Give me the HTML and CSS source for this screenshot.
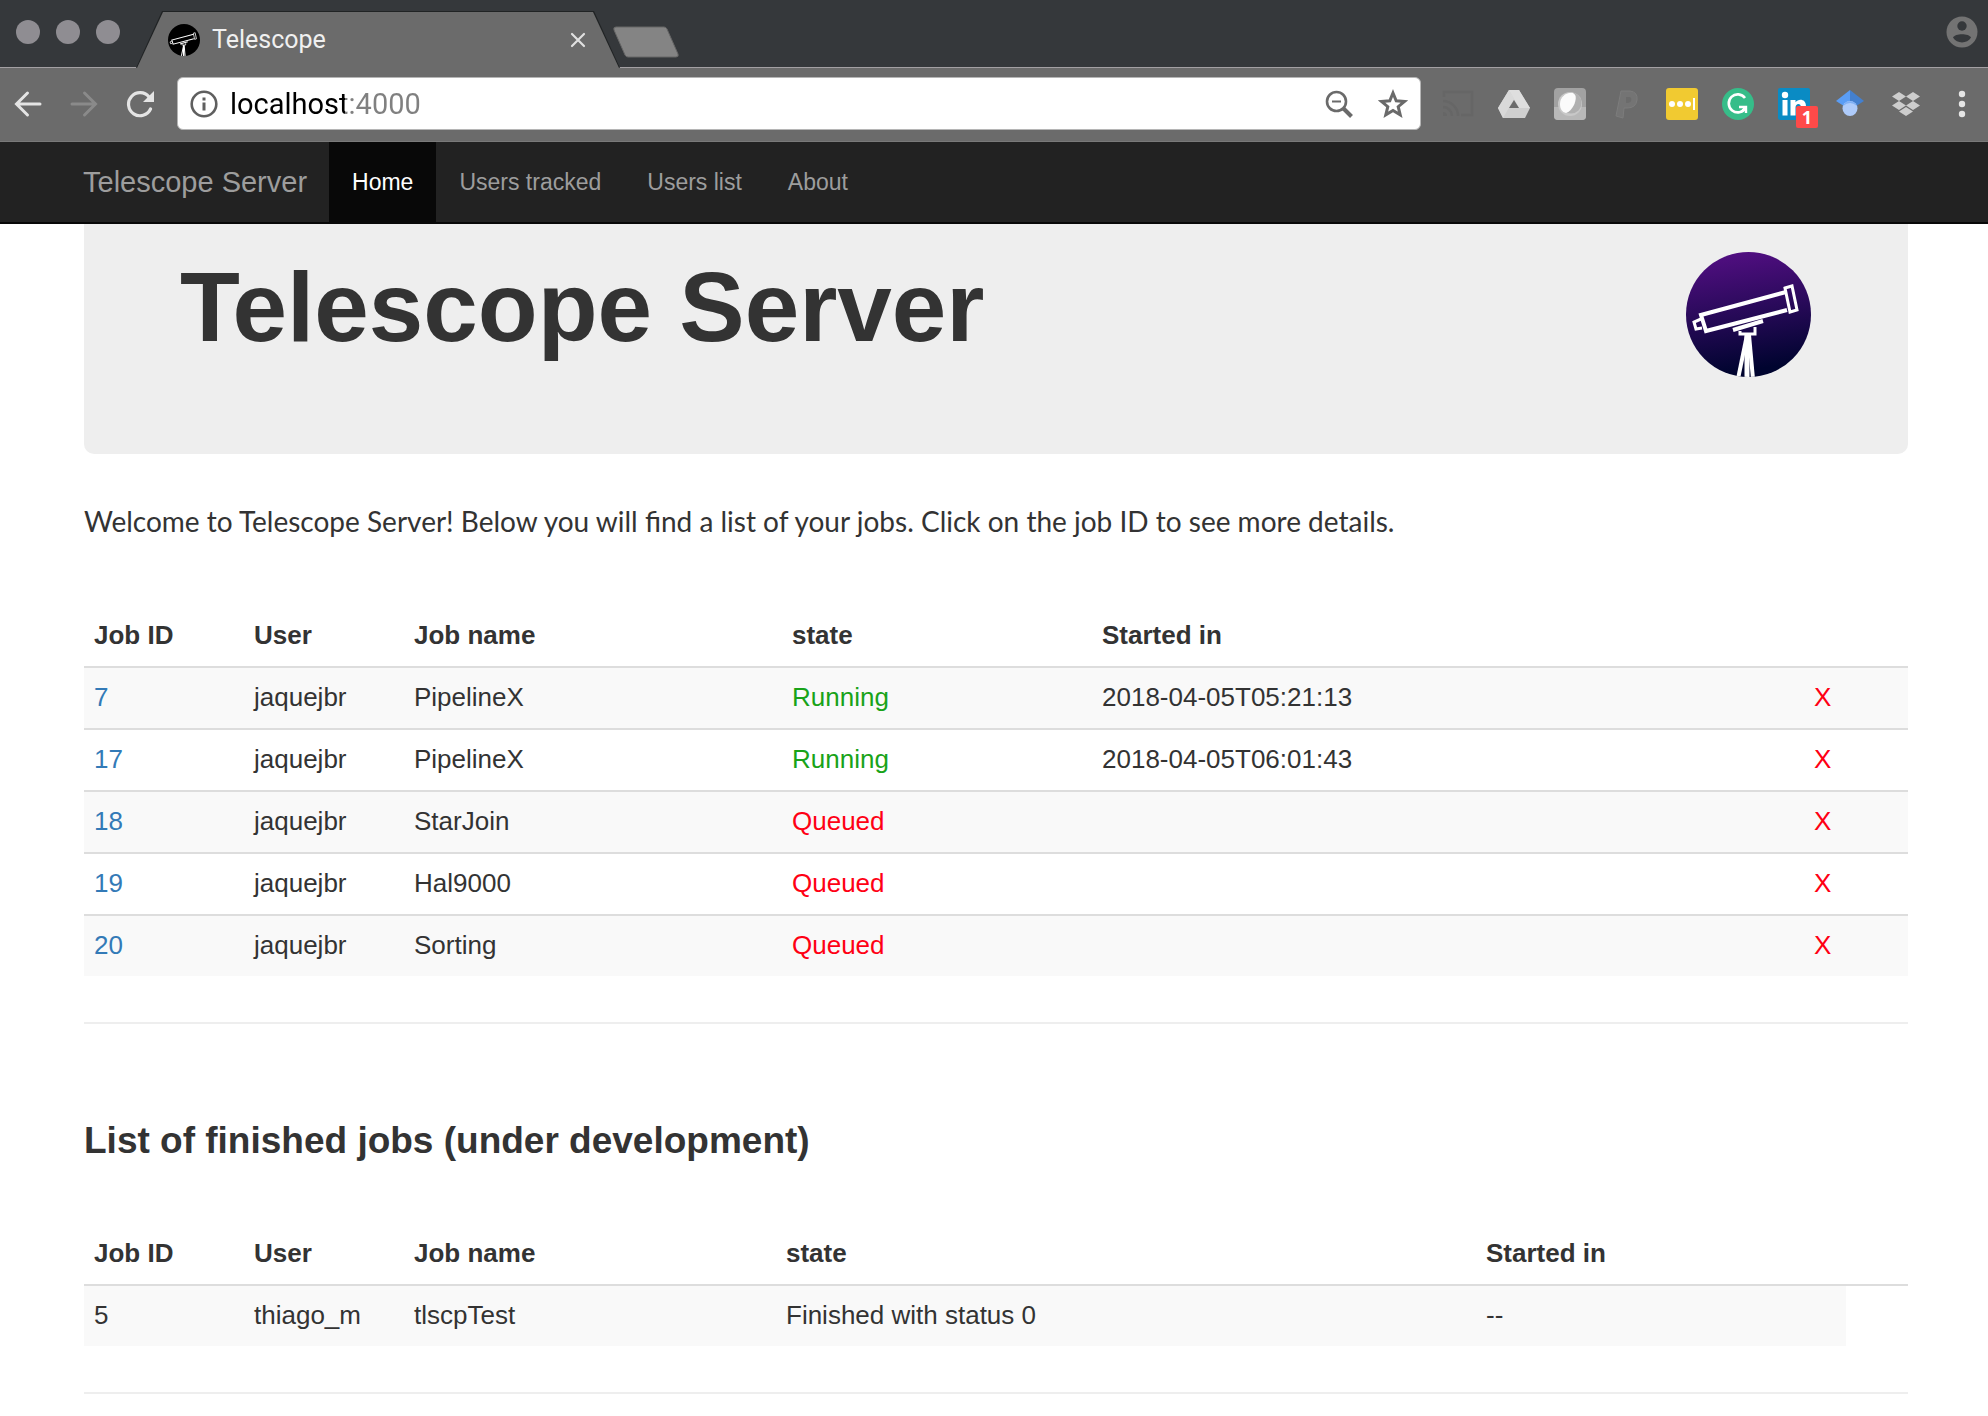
FILE: index.html
```html
<!DOCTYPE html>
<html lang="en">
<head>
<meta charset="utf-8">
<title>Telescope</title>
<link rel="stylesheet" href="styles.css">
</head>
<body>
<svg class="defs" width="0" height="0" aria-hidden="true">
  <defs>
    <linearGradient id="night" x1="0" y1="0" x2="0.15" y2="1">
      <stop offset="0" stop-color="#560f86"/>
      <stop offset="0.5" stop-color="#2b0a5c"/>
      <stop offset="1" stop-color="#00042f"/>
    </linearGradient>
    <clipPath id="disc"><circle cx="62.5" cy="62.5" r="62.5"/></clipPath>
    <symbol id="scope" viewBox="0 0 125 125">
      <g clip-path="url(#disc)" fill="none" stroke="#fff" stroke-width="4">
        <path d="M100 40 15 63l5 16 81-21"/>
        <path d="M99 36l7-2 5 24-7 2z" stroke-width="3"/>
        <path d="M15 67l-7 3 2 7 6-1" stroke-width="3"/>
        <path d="M47 78l30-9" stroke-width="4"/>
        <path d="M54 79v3h15v-7" stroke-width="3"/>
        <path d="M61 83 52 127" stroke-width="4"/>
        <path d="M61 83v44" stroke-width="5"/>
        <path d="M63 83l4 44" stroke-width="4"/>
      </g>
    </symbol>
  </defs>
</svg>

<header class="browser">
  <div class="tabstrip">
    <div class="lights"><span></span><span></span><span></span></div>
    <div class="tab">
      <svg class="favicon" viewBox="0 0 125 125" aria-hidden="true"><circle cx="62.5" cy="62.5" r="62.5"/><use href="#scope"/></svg>
      <span class="tab-title">Telescope</span>
      <button class="icon-btn tab-close" aria-label="Close tab"><svg width="16" height="16" viewBox="0 0 16 16"><path d="M2 2l12 12M14 2 2 14" stroke="#e0e0e0" stroke-width="2.2" stroke-linecap="round"/></svg></button>
    </div>
    <button class="icon-btn new-tab" aria-label="New tab"><svg width="66" height="32" viewBox="0 0 66 32"><path d="M3 1h48q2 0 3 2l11 25q1 3-2 3H15q-2 0-3-2L1 4q-1-3 2-3z" fill="#848484" stroke="#666"/></svg></button>
    <button class="icon-btn profile" aria-label="Profile"><svg width="32" height="32" viewBox="0 0 32 32"><circle cx="16" cy="16" r="15.500" fill="#737373"/><circle cx="16" cy="10" r="4.700" fill="#35383b"/><path d="M7 21.500C9 17 23 17 25 21.500 21 28 11 28 7 21.500z" fill="#35383b"/></svg></button>
  </div>

  <div class="toolbar">
    <div class="history">
      <button class="icon-btn" aria-label="Back"><svg width="28" height="28" viewBox="0 0 28 28"><path d="M26 14H3M13.500 3 2.500 14l11 11" fill="none" stroke="#e4e4e4" stroke-width="3" stroke-linecap="round"/></svg></button>
      <button class="icon-btn" aria-label="Forward"><svg width="28" height="28" viewBox="0 0 28 28"><path d="M2 14h23M14.500 3l11 11-11 11" fill="none" stroke="#8a8a8a" stroke-width="3" stroke-linecap="round"/></svg></button>
      <button class="icon-btn" aria-label="Reload"><svg width="28" height="28" viewBox="0 0 28 28"><path d="M24.500 19A11.500 11.500 0 1 1 23 7" fill="none" stroke="#e4e4e4" stroke-width="3.200" stroke-linecap="round"/><path d="M28 1v11H17z" fill="#e4e4e4"/></svg></button>
    </div>
    <div class="omnibox">
      <button class="icon-btn" aria-label="Site information"><svg width="28" height="28" viewBox="0 0 28 28"><circle cx="14" cy="14" r="12.300" fill="none" stroke="#5f5f5f" stroke-width="2.600"/><path d="M12.500 7.500h3v3h-3zM12.500 12.500h3v8h-3z" fill="#5f5f5f"/></svg></button>
      <input class="address" type="text" aria-label="Address" value="localhost:4000">
      <button class="icon-btn" aria-label="Zoom"><svg width="28" height="28" viewBox="0 0 28 28"><circle cx="11.500" cy="11.500" r="9.500" fill="none" stroke="#6a6a6a" stroke-width="2.600"/><path d="M7 11.500h9" stroke="#6a6a6a" stroke-width="2"/><path d="M18.500 18.500l8 8" stroke="#6a6a6a" stroke-width="4"/></svg></button>
      <button class="icon-btn" aria-label="Bookmark"><svg width="30" height="30" viewBox="0 0 30 30"><path d="M15 4l3.200 7.800 8.300.6-6.300 5.300 2 8.200L15 21.500l-7.200 4.400 2-8.200-6.300-5.300 8.300-.6z" fill="none" stroke="#6a6a6a" stroke-width="3"/></svg></button>
    </div>
    <div class="extensions">
      <button class="icon-btn" aria-label="Cast"><svg width="32" height="32" viewBox="0 0 32 32"><g fill="none" stroke="#666" stroke-width="2.500"><path d="M2 9V4h28v23H19"/><path d="M1 13a15 15 0 0 1 15 15M1 19a9 9 0 0 1 9 9"/></g><path d="M1 24a4 4 0 0 1 4 4H1z" fill="#666"/></svg></button>
      <button class="icon-btn" aria-label="Drive"><svg width="32" height="32" viewBox="0 0 32 32"><path d="M11 2h10l11 18-5 10H5L0 20z" fill="#cfcfcf"/><path d="M11 2 0 20l5 10 11-19z" fill="#d9d9d9"/><path d="M11 2h10l11 18H21z" fill="#dedede"/><path d="M16 12l5 8H11z" fill="#6b6b6b"/></svg></button>
      <button class="icon-btn" aria-label="Lens"><svg width="32" height="32" viewBox="0 0 32 32"><rect width="32" height="32" rx="4" fill="#a2a2a2"/><path d="M0 19h32v9a4 4 0 0 1-4 4H4a4 4 0 0 1-4-4z" fill="#b8b8b8"/><circle cx="16" cy="16" r="12" fill="#c8c8c8"/><circle cx="17" cy="15" r="10.500" fill="#b0b0b0"/><path d="M6 16C6 9 12 4 19 5c4 2 3 7 1 12-2 4-5 7-8 8-4-1-6-4-6-9z" fill="#fbfbfb"/></svg></button>
      <button class="icon-btn" aria-label="Pandora"><svg width="32" height="32" viewBox="0 0 32 32"><path d="M11 3h9q8 1 7 9-1 8-10 8h-3l-1 10-7-2z" fill="#747474" stroke="#7c7c7c"/><path d="M16 9h4q2 1 1 4-1 2-5 2z" fill="#6b6b6b"/></svg></button>
      <button class="icon-btn" aria-label="Passwords"><svg width="32" height="32" viewBox="0 0 32 32"><rect width="32" height="32" rx="3" fill="#f1ca31"/><g fill="#fff"><circle cx="6" cy="16" r="3"/><circle cx="14" cy="16" r="3"/><circle cx="22" cy="16" r="3"/><path d="M27 10h2v12h-2z"/></g></svg></button>
      <button class="icon-btn" aria-label="Grammar"><svg width="32" height="32" viewBox="0 0 32 32"><circle cx="16" cy="16" r="16" fill="#36bd89"/><path d="M23 10A9 9 0 1 0 23.500 20" fill="none" stroke="#fff" stroke-width="2.600"/><path d="M17 19h7v6M24 19l-5 5" fill="none" stroke="#fff" stroke-width="2.400"/></svg></button>
      <button class="icon-btn has-badge" aria-label="LinkedIn, 1 notification"><svg width="32" height="32" viewBox="0 0 32 32"><rect width="32" height="32" rx="2" fill="#0a8bc4"/><g fill="#fff"><circle cx="7" cy="7" r="3.200"/><path d="M4.500 12h5v15.500h-5zM12.500 12h5v2.200c3-4 10.500-3.500 10.500 4v9.300h-5v-8c0-5-5.500-4.500-5.500 0v8h-5z"/></g></svg><span class="badge">1</span></button>
      <button class="icon-btn" aria-label="Scholar"><svg width="32" height="32" viewBox="0 0 32 32"><path d="M16 2v20L2 13z" fill="#5a9df5"/><path d="M16 2l14 11-14 9z" fill="#4480cf"/><circle cx="16" cy="20.500" r="7.500" fill="#aecbfa"/><path d="M9 18a7.500 7.500 0 0 1 14 0q-7-6-14 0z" fill="#7fb0f5"/></svg></button>
      <button class="icon-btn" aria-label="Dropbox"><svg width="32" height="32" viewBox="0 0 32 32"><path d="M9 4l7 4.500L9 13 2 8.500zM23 4l7 4.500-7 4.500-7-4.500zM9 13l7 4.500L9 22l-7-4.500zM23 13l7 4.500-7 4.500-7-4.500zM16 19l7 4.500-7 4.500-7-4.500z" fill="#cdcdcd"/></svg></button>
      <button class="icon-btn" aria-label="Menu"><svg width="32" height="32" viewBox="0 0 32 32" fill="#e6e6e6"><circle cx="16" cy="6" r="3.200"/><circle cx="16" cy="16" r="3.200"/><circle cx="16" cy="26" r="3.200"/></svg></button>
    </div>
  </div>
</header>

<nav class="navbar">
  <a class="brand" href="#">Telescope Server</a>
  <ul class="nav">
    <li><a class="active" href="#">Home</a></li>
    <li><a href="#">Users tracked</a></li>
    <li><a href="#">Users list</a></li>
    <li><a href="#">About</a></li>
  </ul>
</nav>

<main class="container">
  <section class="jumbotron">
    <h1>Telescope Server</h1>
    <svg class="logo" viewBox="0 0 125 125" role="img" aria-label="Telescope"><circle cx="62.5" cy="62.5" r="62.5" fill="url(#night)"/><use href="#scope"/></svg>
  </section>

  <p class="intro">Welcome to Telescope Server! Below you will find a list of your jobs. Click on the job ID to see more details.</p>

  <table class="jobs">
    <colgroup><col class="c-id"><col class="c-user"><col class="c-name"><col class="c-state"><col><col class="c-cancel"></colgroup>
    <thead>
      <tr><th>Job ID</th><th>User</th><th>Job name</th><th>state</th><th>Started in</th><th></th></tr>
    </thead>
    <tbody>
      <tr><td><a href="#">7</a></td><td>jaquejbr</td><td>PipelineX</td><td class="running">Running</td><td>2018-04-05T05:21:13</td><td><a class="cancel" href="#">X</a></td></tr>
      <tr><td><a href="#">17</a></td><td>jaquejbr</td><td>PipelineX</td><td class="running">Running</td><td>2018-04-05T06:01:43</td><td><a class="cancel" href="#">X</a></td></tr>
      <tr><td><a href="#">18</a></td><td>jaquejbr</td><td>StarJoin</td><td class="queued">Queued</td><td></td><td><a class="cancel" href="#">X</a></td></tr>
      <tr><td><a href="#">19</a></td><td>jaquejbr</td><td>Hal9000</td><td class="queued">Queued</td><td></td><td><a class="cancel" href="#">X</a></td></tr>
      <tr><td><a href="#">20</a></td><td>jaquejbr</td><td>Sorting</td><td class="queued">Queued</td><td></td><td><a class="cancel" href="#">X</a></td></tr>
    </tbody>
  </table>

  <hr>

  <h2>List of finished jobs (under development)</h2>

  <table class="jobs">
    <colgroup><col class="c-id"><col class="c-user"><col class="c-name-done"><col class="c-state-done"><col><col class="c-end"></colgroup>
    <thead>
      <tr><th>Job ID</th><th>User</th><th>Job name</th><th>state</th><th>Started in</th><th></th></tr>
    </thead>
    <tbody>
      <tr><td>5</td><td>thiago_m</td><td>tlscpTest</td><td>Finished with status 0</td><td>--</td></tr>
    </tbody>
  </table>

  <hr>
</main>
</body>
</html>
```

FILE: styles.css
```css
* { box-sizing: border-box; }

body {
  margin: 0;
  background: #fff;
  color: #333;
  font-family: "Liberation Sans", Arial, sans-serif;
  font-size: 26px;
  line-height: 36px;
}

.defs { position: absolute; }

a { color: #337ab7; text-decoration: none; }

svg { display: block; }

.icon-btn {
  display: block;
  flex: none;
  margin: 0;
  padding: 0;
  border: 0;
  background: none;
}

/* Browser window */

.tabstrip {
  display: flex;
  align-items: flex-end;
  height: 68px;
  padding: 0 10px 0 16px;
  background: #35383b;
  border-bottom: 1px solid #a3a0a3;
}

.lights {
  display: flex;
  gap: 16px;
  align-self: center;
  margin: 0 16px 4px 0;
}

.lights span {
  width: 24px;
  height: 24px;
  border-radius: 50%;
  background: #8f8d92;
}

.tab {
  position: relative;
  z-index: 0;
  display: flex;
  align-items: center;
  gap: 12px;
  width: 484px;
  height: 57px;
  margin-bottom: -1px;
  padding: 0 34px 0 32px;
}

.tab::before,
.tab::after {
  content: "";
  position: absolute;
  z-index: -1;
  inset: 0;
  background: #202324;
  clip-path: polygon(0 100%, 26px 0, 458px 0, 100% 100%);
}

.tab::after {
  inset: 1px 1px 0;
  background: #6b6b6b;
  clip-path: polygon(0 100%, 26px 0, 456px 0, 100% 100%);
}

.favicon { width: 32px; height: 32px; }

.tab-title {
  flex: 1;
  color: #f0f0f0;
  font-family: Roboto, sans-serif;
  font-size: 25px;
}

.new-tab { margin: 0 0 9px -7px; }

.profile { align-self: center; margin: 0 0 4px auto; }

.toolbar {
  display: flex;
  align-items: center;
  height: 74px;
  padding: 0 10px 2px 14px;
  background: #6b6b6b;
  border-bottom: 1px solid #7a7a7a;
}

.history { display: flex; gap: 28px; margin-right: 23px; }

.omnibox {
  display: flex;
  align-items: center;
  gap: 12px;
  flex: 1;
  height: 53px;
  padding: 0 12px;
  background: #fff;
  border: 1px solid #b5b5b5;
  border-radius: 6px;
}

.address {
  flex: 1;
  min-width: 0;
  padding: 0;
  border: 0;
  outline: 0;
  color: transparent;
  background: linear-gradient(90deg, #000 115px, #808080 115px);
  -webkit-background-clip: text;
  background-clip: text;
  font-family: Roboto, sans-serif;
  font-size: 29px;
}

.omnibox .icon-btn + .icon-btn { margin-left: 13px; }

.extensions { display: flex; gap: 24px; margin-left: 21px; }

.has-badge { position: relative; }

.badge {
  position: absolute;
  left: 18px;
  top: 18px;
  width: 22px;
  height: 22px;
  border-radius: 2px;
  background: #fe4a49;
  color: #fff;
  font: bold 18px/22px "Open Sans", sans-serif;
  text-align: center;
}

/* Page */

.navbar {
  display: flex;
  align-items: center;
  height: 82px;
  padding-left: 83px;
  background: #222;
  border-bottom: 2px solid #080808;
}

.navbar a { color: #9d9d9d; }

.brand { margin-right: 22px; font-size: 29px; }

.nav {
  display: flex;
  margin: 0;
  padding: 0;
  list-style: none;
  font-size: 23px;
}

.nav a { display: block; padding: 0 23px; line-height: 80px; }

.navbar .active { background: #080808; color: #fff; }

.container { padding: 0 80px 22px 84px; }

.jumbotron {
  display: flex;
  justify-content: space-between;
  align-items: flex-start;
  height: 230px;
  padding: 28px 97px 0 96px;
  background: #eee;
  border-radius: 0 0 10px 10px;
}

h1 { margin: 0; font-size: 98px; line-height: 110px; }

.logo { width: 125px; height: 125px; }

.intro {
  margin: 49px 0 65px;
  font-family: Lato, sans-serif;
  font-size: 28px;
}

.jobs {
  width: 100%;
  table-layout: fixed;
  border-collapse: separate;
  border-spacing: 0;
}

.c-id, .c-user { width: 160px; }
.c-name { width: 378px; }
.c-state { width: 310px; }
.c-cancel { width: 104px; }
.c-name-done { width: 372px; }
.c-state-done { width: 700px; }
.c-end { width: 62px; }

.jobs th,
.jobs td {
  height: 62px;
  padding: 11px 10px 13px;
  text-align: left;
}

.jobs th { border-bottom: 2px solid #ddd; height: 64px; padding: 12px 10px; }

.jobs td { border-top: 2px solid #ddd; }

.jobs tbody tr:first-child td { border-top: 0; height: 60px; }

.jobs tbody tr:nth-child(odd) td { background: #f9f9f9; }

.running { color: #19a319; }

.queued, .cancel { color: #ff0014; }

hr {
  height: 2px;
  margin: 46px 0;
  border: 0;
  background: #eee;
}

h2 {
  margin: 94px 0 58px;
  font-size: 37px;
  line-height: 46px;
}
```
